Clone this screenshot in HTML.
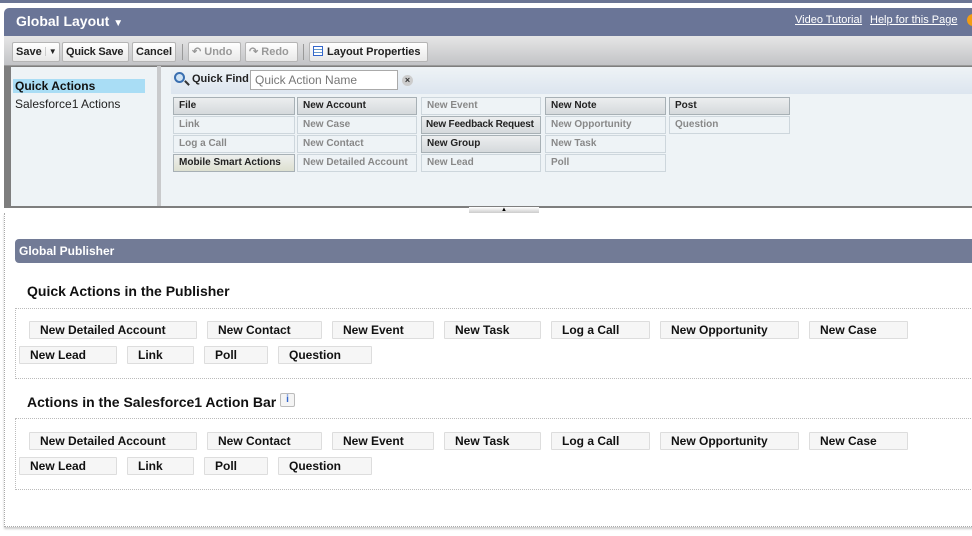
<!DOCTYPE html>
<html><head><meta charset="utf-8"><style>
*{box-sizing:border-box;margin:0;padding:0}
body{width:972px;height:536px;overflow:hidden;background:#fff;font-family:"Liberation Sans",Arial,sans-serif;position:relative}
.a{position:absolute;white-space:nowrap}
.tb{position:absolute;top:42px;height:20px;border:1px solid #b5b5b5;border-radius:2px;background:linear-gradient(#fff,#e8e8e8);font-size:11px;font-weight:bold;color:#222;line-height:18px;padding:0 3px;white-space:nowrap;overflow:hidden}
.tb.dis{color:#999}
.c{position:absolute;height:18px;border:1px solid #cdd6dc;font-size:10px;font-weight:bold;color:#888;line-height:15px;padding-left:5px;background:#eef3f6;white-space:nowrap;overflow:hidden}
.c.on{background:linear-gradient(#eceeef,#d5d9dc);border-color:#a7b0b5;color:#222}
.b{position:absolute;height:18px;border:1px solid #ddd;background:#f6f6f6;font-size:12px;font-weight:bold;color:#111;line-height:16px;padding-left:10px;border-radius:1px;white-space:nowrap}
</style></head><body>
<div class="a" style="left:0;top:0;width:972px;height:3px;background:#6b7594"></div>
<div class="a" style="left:4px;top:8px;width:968px;height:28px;background:#6a7597;border-radius:5px 0 0 0"></div>
<div class="a" style="left:16px;top:13px;font-size:14px;font-weight:bold;color:#fff">Global Layout <span style="font-size:10px">▼</span></div>
<div class="a" style="left:795px;top:14px;font-size:11px;color:#fff;text-decoration:underline">Video Tutorial</div>
<div class="a" style="left:870px;top:14px;font-size:11px;color:#fff;text-decoration:underline">Help for this Page</div>
<div class="a" style="left:967px;top:14px;width:12px;height:12px;border-radius:50%;background:#f39c12"></div>
<div class="a" style="left:4px;top:36px;width:968px;height:30px;background:linear-gradient(#e6e6e6,#c2c3c6);border-bottom:1px solid #999"></div>
<div class="tb" style="left:12px;width:48px">Save <span style="border-left:1px solid #ccc;padding-left:3px;font-size:8px;vertical-align:1px">▼</span></div>
<div class="tb" style="left:62px;width:67px;letter-spacing:-0.2px">Quick Save</div>
<div class="tb" style="left:132px;width:44px">Cancel</div>
<div class="a" style="left:182px;top:44px;width:1px;height:16px;background:#999"></div>
<div class="tb dis" style="left:188px;width:53px">↶ Undo</div>
<div class="tb dis" style="left:245px;width:53px">↷ Redo</div>
<div class="a" style="left:303px;top:44px;width:1px;height:16px;background:#999"></div>
<div class="tb" style="left:309px;width:119px"><span style="display:inline-block;width:10px;height:10px;border:1px solid #36c;background:repeating-linear-gradient(#fff 0 2px,#69c 2px 3px);vertical-align:-1px;margin-right:4px"></span>Layout Properties</div>
<div class="a" style="left:4px;top:66px;width:968px;height:142px;background:#7e7e7e"></div>
<div class="a" style="left:11px;top:67px;width:146px;height:139px;background:#eef3f6"></div>
<div class="a" style="left:13px;top:79px;width:132px;height:14px;background:#a9ddf5"></div>
<div class="a" style="left:15px;top:79px;font-size:12px;font-weight:bold;color:#111">Quick Actions</div>
<div class="a" style="left:15px;top:97px;font-size:12px;color:#222">Salesforce1 Actions</div>
<div class="a" style="left:157px;top:66px;width:4px;height:140px;background:#c9cacc"></div>
<div class="a" style="left:161px;top:67px;width:811px;height:139px;background:#eef3f6"></div>
<div class="a" style="left:171px;top:67px;width:801px;height:27px;background:linear-gradient(#eef3f6,#dce5ef)"></div>
<div class="a" style="left:174px;top:72px;width:11px;height:11px;border:2px solid #3a6fb0;border-radius:50%;background:#cfe3f5"></div>
<div class="a" style="left:184px;top:82px;width:6px;height:2px;background:#333;transform:rotate(45deg)"></div>
<div class="a" style="left:192px;top:73px;font-size:11px;font-weight:bold;color:#222">Quick Find</div>
<div class="a" style="left:250px;top:70px;width:148px;height:20px;border:1px solid #aaa;background:#fff;font-size:12px;color:#777;padding:2px 0 0 4px">Quick Action Name</div>
<div class="a" style="left:402px;top:75px;width:11px;height:11px;border-radius:50%;background:#ccc;font-size:9px;line-height:11px;text-align:center;color:#333;font-weight:bold">×</div>
<div class="c on" style="left:173px;top:97px;width:122px">File</div>
<div class="c on" style="left:297px;top:97px;width:120px">New Account</div>
<div class="c" style="left:421px;top:97px;width:120px">New Event</div>
<div class="c on" style="left:545px;top:97px;width:121px">New Note</div>
<div class="c on" style="left:669px;top:97px;width:121px">Post</div>
<div class="c" style="left:173px;top:116px;width:122px">Link</div>
<div class="c" style="left:297px;top:116px;width:120px">New Case</div>
<div class="c on" style="left:421px;top:116px;width:120px;padding-left:4px;letter-spacing:-0.2px">New Feedback Request</div>
<div class="c" style="left:545px;top:116px;width:121px">New Opportunity</div>
<div class="c" style="left:669px;top:116px;width:121px">Question</div>
<div class="c" style="left:173px;top:135px;width:122px">Log a Call</div>
<div class="c" style="left:297px;top:135px;width:120px">New Contact</div>
<div class="c on" style="left:421px;top:135px;width:120px">New Group</div>
<div class="c" style="left:545px;top:135px;width:121px">New Task</div>
<div class="c on" style="left:173px;top:154px;width:122px;background:linear-gradient(#eef0ee,#dde0d0)">Mobile Smart Actions</div>
<div class="c" style="left:297px;top:154px;width:120px">New Detailed Account</div>
<div class="c" style="left:421px;top:154px;width:120px">New Lead</div>
<div class="c" style="left:545px;top:154px;width:121px">Poll</div>
<div class="a" style="left:469px;top:207px;width:70px;height:6px;background:linear-gradient(#fff,#ccc);font-size:6px;line-height:6px;text-align:center">▲</div>
<div class="a" style="left:4px;top:213px;width:970px;height:314px;border-left:1px dotted #aaa;border-bottom:1px dotted #aaa;box-shadow:0 2px 2px #ccc"></div>
<div class="a" style="left:15px;top:239px;width:957px;height:24px;background:#727b96;border-radius:4px 0 0 4px"></div>
<div class="a" style="left:19px;top:244px;font-size:12px;font-weight:bold;color:#fff">Global Publisher</div>
<div class="a" style="left:27px;top:283px;font-size:14px;font-weight:bold;color:#111">Quick Actions in the Publisher</div>
<div class="a" style="left:15px;top:308px;width:960px;height:71px;border:1px dotted #bbb;border-right:none"></div>
<div class="a" style="left:27px;top:394px;font-size:14px;font-weight:bold;color:#111">Actions in the Salesforce1 Action Bar</div>
<div class="a" style="left:280px;top:393px;width:15px;height:14px;border:1px solid #bbb;border-radius:2px;background:#f4f4f4;font-size:10px;color:#36c;text-align:center;line-height:12px;font-weight:bold">i</div>
<div class="a" style="left:15px;top:418px;width:960px;height:72px;border:1px dotted #bbb;border-right:none"></div>

<div class="b" style="left:29px;top:321px;width:168px">New Detailed Account</div>
<div class="b" style="left:207px;top:321px;width:115px">New Contact</div>
<div class="b" style="left:332px;top:321px;width:102px">New Event</div>
<div class="b" style="left:444px;top:321px;width:97px">New Task</div>
<div class="b" style="left:551px;top:321px;width:99px">Log a Call</div>
<div class="b" style="left:660px;top:321px;width:139px">New Opportunity</div>
<div class="b" style="left:809px;top:321px;width:99px">New Case</div>
<div class="b" style="left:19px;top:346px;width:98px">New Lead</div>
<div class="b" style="left:127px;top:346px;width:67px">Link</div>
<div class="b" style="left:204px;top:346px;width:64px">Poll</div>
<div class="b" style="left:278px;top:346px;width:94px">Question</div>

<div class="b" style="left:29px;top:432px;width:168px">New Detailed Account</div>
<div class="b" style="left:207px;top:432px;width:115px">New Contact</div>
<div class="b" style="left:332px;top:432px;width:102px">New Event</div>
<div class="b" style="left:444px;top:432px;width:97px">New Task</div>
<div class="b" style="left:551px;top:432px;width:99px">Log a Call</div>
<div class="b" style="left:660px;top:432px;width:139px">New Opportunity</div>
<div class="b" style="left:809px;top:432px;width:99px">New Case</div>
<div class="b" style="left:19px;top:457px;width:98px">New Lead</div>
<div class="b" style="left:127px;top:457px;width:67px">Link</div>
<div class="b" style="left:204px;top:457px;width:64px">Poll</div>
<div class="b" style="left:278px;top:457px;width:94px">Question</div>
</body></html>
